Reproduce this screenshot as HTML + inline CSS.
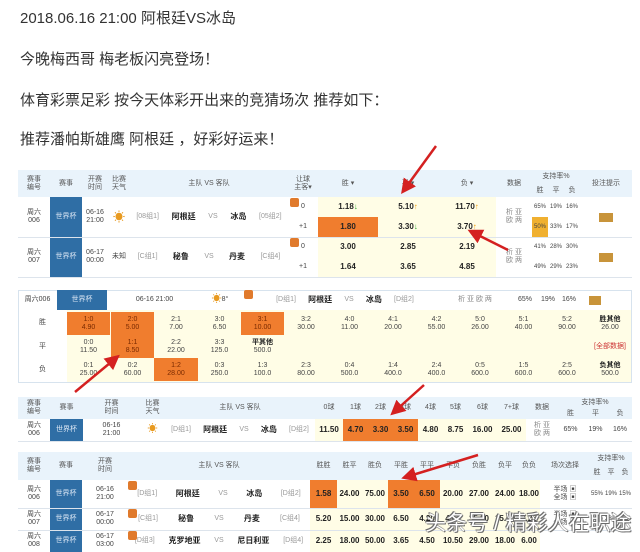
<!DOCTYPE html>
<html><head><meta charset="utf-8"><style>
*{margin:0;padding:0;box-sizing:border-box}
body{width:640px;height:545px;background:#fff;position:relative;overflow:hidden;font-family:"Liberation Sans","Noto Sans CJK SC",sans-serif;color:#333}
.t{position:absolute;left:20px;font-size:15px;color:#333;white-space:nowrap;line-height:18px}
.c{position:absolute;display:flex;align-items:center;justify-content:center;text-align:center;font-size:7px;line-height:8px;color:#444;white-space:nowrap}
.h{background:#e9f3fb;color:#555}
.y{background:#fffde6}
.o{background:#f07d2e;color:#7a2a00}
.b{background:#2f6ea5;color:#dde8f5}
.bold{font-weight:bold;color:#222;font-size:8px}
.ln{position:absolute;background:#dde4ec}
.box{position:absolute;border:1px solid #d7e3ee}
.sh{width:9px;height:9px;background:#e07a2c;border-radius:2px}
.s6{font-size:6px}
</style></head><body>
<div class="t" style="top:10px">2018.06.16 21:00 阿根廷VS冰岛</div>
<div class="t" style="top:51px">今晚梅西哥 梅老板闪亮登场！</div>
<div class="t" style="top:92px">体育彩票足彩 按今天体彩开出来的竞猜场次 推荐如下：</div>
<div class="t" style="top:131px">推荐潘帕斯雄鹰 阿根廷 ，好彩好运来！</div>

<!-- TABLE 1 -->
<div class="c h" style="left:18px;top:170px;width:614px;height:27px"></div>
<div class="c h" style="left:18px;top:170px;width:32px;height:27px">赛事<br>编号</div>
<div class="c h" style="left:50px;top:170px;width:32px;height:27px">赛事</div>
<div class="c h" style="left:82px;top:170px;width:26px;height:27px">开赛<br>时间</div>
<div class="c h" style="left:108px;top:170px;width:22px;height:27px">比赛<br>天气</div>
<div class="c h" style="left:130px;top:170px;width:158px;height:27px">主队 VS 客队</div>
<div class="c h" style="left:288px;top:170px;width:30px;height:27px">让球<br>主客▾</div>
<div class="c h" style="left:318px;top:170px;width:60px;height:27px">胜 ▾</div>
<div class="c h" style="left:378px;top:170px;width:60px;height:27px">平 ▾</div>
<div class="c h" style="left:438px;top:170px;width:58px;height:27px">负 ▾</div>
<div class="c h" style="left:496px;top:170px;width:36px;height:27px">数据</div>
<div class="c h" style="left:532px;top:170px;width:48px;height:14px">支持率%</div>
<div class="c h" style="left:532px;top:184px;width:16px;height:13px">胜</div>
<div class="c h" style="left:548px;top:184px;width:16px;height:13px">平</div>
<div class="c h" style="left:564px;top:184px;width:16px;height:13px">负</div>
<div class="c h" style="left:580px;top:170px;width:52px;height:27px">投注提示</div>

<div class="c" style="left:18px;top:197px;width:32px;height:40px">周六<br>006</div>
<div class="c b" style="left:50px;top:197px;width:32px;height:40px">世界杯</div>
<div class="c" style="left:82px;top:197px;width:26px;height:40px">06-16<br>21:00</div>
<div class="c" style="left:108px;top:197px;width:22px;height:40px;color:#e89a20;font-size:12px">☀</div>
<div class="c" style="left:130px;top:197px;width:158px;height:40px;justify-content:space-around;color:#999">[08组1] <b style="color:#222;font-size:8px">阿根廷</b> VS <b style="color:#222;font-size:8px">冰岛</b> [05组2]</div>
<div class="c" style="left:288px;top:197px;width:30px;height:20px">0</div>
<div class="c" style="left:288px;top:217px;width:30px;height:20px">+1</div>
<div class="c y bold" style="left:318px;top:197px;width:60px;height:20px">1.18 <span style="color:#3a3">↓</span></div>
<div class="c y bold" style="left:378px;top:197px;width:60px;height:20px">5.10 <span style="color:#e90">↑</span></div>
<div class="c y bold" style="left:438px;top:197px;width:58px;height:20px">11.70 <span style="color:#e90">↑</span></div>
<div class="c o bold" style="left:318px;top:217px;width:60px;height:20px">1.80</div>
<div class="c y bold" style="left:378px;top:217px;width:60px;height:20px">3.30 <span style="color:#3a3">↓</span></div>
<div class="c y bold" style="left:438px;top:217px;width:58px;height:20px">3.70 <span style="color:#e90">↑</span></div>
<div class="c" style="left:496px;top:197px;width:36px;height:40px;color:#888">析 亚<br>欧 两</div>
<div class="c s6" style="left:532px;top:197px;width:16px;height:20px">65%</div>
<div class="c s6" style="left:548px;top:197px;width:16px;height:20px">19%</div>
<div class="c s6" style="left:564px;top:197px;width:16px;height:20px">16%</div>
<div class="c s6" style="left:532px;top:217px;width:16px;height:20px;background:#f0b030">50%</div>
<div class="c s6" style="left:548px;top:217px;width:16px;height:20px">33%</div>
<div class="c s6" style="left:564px;top:217px;width:16px;height:20px">17%</div>
<div class="c" style="left:580px;top:197px;width:52px;height:40px"><div style="width:14px;height:9px;background:#c8943a"></div></div>

<div class="c" style="left:18px;top:237px;width:32px;height:40px">周六<br>007</div>
<div class="c b" style="left:50px;top:237px;width:32px;height:40px">世界杯</div>
<div class="c" style="left:82px;top:237px;width:26px;height:40px">06-17<br>00:00</div>
<div class="c" style="left:108px;top:237px;width:22px;height:40px">未知</div>
<div class="c" style="left:130px;top:237px;width:158px;height:40px;justify-content:space-around;color:#999">[C组1] <b style="color:#222;font-size:8px">秘鲁</b> VS <b style="color:#222;font-size:8px">丹麦</b> [C组4]</div>
<div class="c" style="left:288px;top:237px;width:30px;height:20px">0</div>
<div class="c" style="left:288px;top:257px;width:30px;height:20px">+1</div>
<div class="c y bold" style="left:318px;top:237px;width:60px;height:20px">3.00</div>
<div class="c y bold" style="left:378px;top:237px;width:60px;height:20px">2.85</div>
<div class="c y bold" style="left:438px;top:237px;width:58px;height:20px">2.19</div>
<div class="c y bold" style="left:318px;top:257px;width:60px;height:20px">1.64</div>
<div class="c y bold" style="left:378px;top:257px;width:60px;height:20px">3.65</div>
<div class="c y bold" style="left:438px;top:257px;width:58px;height:20px">4.85</div>
<div class="c" style="left:496px;top:237px;width:36px;height:40px;color:#888">析 亚<br>欧 两</div>
<div class="c s6" style="left:532px;top:237px;width:16px;height:20px">41%</div>
<div class="c s6" style="left:548px;top:237px;width:16px;height:20px">28%</div>
<div class="c s6" style="left:564px;top:237px;width:16px;height:20px">30%</div>
<div class="c s6" style="left:532px;top:257px;width:16px;height:20px">49%</div>
<div class="c s6" style="left:548px;top:257px;width:16px;height:20px">29%</div>
<div class="c s6" style="left:564px;top:257px;width:16px;height:20px">23%</div>
<div class="c" style="left:580px;top:237px;width:52px;height:40px"><div style="width:14px;height:9px;background:#c8943a"></div></div>
<div class="ln" style="left:18px;top:277px;width:614px;height:1px"></div>
<div class="ln" style="left:18px;top:237px;width:614px;height:1px"></div>
<div style="position:absolute;left:290px;top:198px" class="sh"></div>
<div style="position:absolute;left:290px;top:238px" class="sh"></div>

<!-- TABLE 2 -->
<div class="box" style="left:18px;top:290px;width:614px;height:93px"></div>
<div class="c" style="left:18px;top:290px;width:39px;height:20px">周六006</div>
<div class="c b" style="left:57px;top:290px;width:50px;height:20px">世界杯</div>
<div class="c" style="left:107px;top:290px;width:95px;height:20px">06-16 21:00</div>
<div class="c" style="left:200px;top:290px;width:40px;height:20px;color:#e89a20;font-size:10px">☀<span style="font-size:7px;color:#444">8°</span></div>
<div class="c" style="left:270px;top:290px;width:150px;height:20px;justify-content:space-around;color:#999">[D组1] <b style="color:#222;font-size:8px">阿根廷</b> VS <b style="color:#222;font-size:8px">冰岛</b> [D组2]</div>
<div style="position:absolute;left:244px;top:290px" class="sh"></div>
<div class="c" style="left:450px;top:290px;width:50px;height:20px;color:#888">析 亚 欧 两</div>
<div class="c" style="left:515px;top:290px;width:20px;height:20px">65%</div>
<div class="c" style="left:538px;top:290px;width:20px;height:20px">19%</div>
<div class="c" style="left:559px;top:290px;width:20px;height:20px">16%</div>
<div class="c" style="left:588px;top:290px;width:14px;height:20px"><div style="width:12px;height:9px;background:#c8943a"></div></div>
<div class="c" style="left:67px;top:310px;width:564px;height:72px;background:#fffde6"></div>
<div class="c" style="left:18px;top:310px;width:49px;height:25px">胜</div>
<div class="c" style="left:18px;top:335px;width:49px;height:23px">平</div>
<div class="c" style="left:18px;top:358px;width:49px;height:24px">负</div>

<div class="c o" style="left:67px;top:312px;width:43px;height:23px">1:0<br>4.90</div>
<div class="c o" style="left:111px;top:312px;width:43px;height:23px">2:0<br>5.00</div>
<div class="c" style="left:154px;top:312px;width:44px;height:23px">2:1<br>7.00</div>
<div class="c" style="left:198px;top:312px;width:43px;height:23px">3:0<br>6.50</div>
<div class="c o" style="left:241px;top:312px;width:43px;height:23px">3:1<br>10.00</div>
<div class="c" style="left:284px;top:312px;width:44px;height:23px">3:2<br>30.00</div>
<div class="c" style="left:328px;top:312px;width:43px;height:23px">4:0<br>11.00</div>
<div class="c" style="left:371px;top:312px;width:44px;height:23px">4:1<br>20.00</div>
<div class="c" style="left:415px;top:312px;width:43px;height:23px">4:2<br>55.00</div>
<div class="c" style="left:458px;top:312px;width:44px;height:23px">5:0<br>26.00</div>
<div class="c" style="left:502px;top:312px;width:43px;height:23px">5:1<br>40.00</div>
<div class="c" style="left:545px;top:312px;width:44px;height:23px">5:2<br>90.00</div>
<div class="c" style="left:589px;top:312px;width:42px;height:23px;flex-direction:column"><b style="color:#222">胜其他</b>26.00</div>

<div class="c" style="left:67px;top:335px;width:43px;height:23px">0:0<br>11.50</div>
<div class="c o" style="left:111px;top:335px;width:43px;height:23px">1:1<br>8.50</div>
<div class="c" style="left:154px;top:335px;width:44px;height:23px">2:2<br>22.00</div>
<div class="c" style="left:198px;top:335px;width:43px;height:23px">3:3<br>125.0</div>
<div class="c" style="left:241px;top:335px;width:43px;height:23px;flex-direction:column"><b style="color:#222">平其他</b>500.0</div>
<div class="c" style="left:589px;top:335px;width:42px;height:23px;color:#c33">[全部数据]</div>

<div class="c" style="left:67px;top:358px;width:43px;height:23px">0:1<br>25.00</div>
<div class="c" style="left:111px;top:358px;width:43px;height:23px">0:2<br>60.00</div>
<div class="c o" style="left:154px;top:358px;width:44px;height:23px">1:2<br>28.00</div>
<div class="c" style="left:198px;top:358px;width:43px;height:23px">0:3<br>250.0</div>
<div class="c" style="left:241px;top:358px;width:43px;height:23px">1:3<br>100.0</div>
<div class="c" style="left:284px;top:358px;width:44px;height:23px">2:3<br>80.00</div>
<div class="c" style="left:328px;top:358px;width:43px;height:23px">0:4<br>500.0</div>
<div class="c" style="left:371px;top:358px;width:44px;height:23px">1:4<br>400.0</div>
<div class="c" style="left:415px;top:358px;width:43px;height:23px">2:4<br>400.0</div>
<div class="c" style="left:458px;top:358px;width:44px;height:23px">0:5<br>600.0</div>
<div class="c" style="left:502px;top:358px;width:43px;height:23px">1:5<br>600.0</div>
<div class="c" style="left:545px;top:358px;width:44px;height:23px">2:5<br>600.0</div>
<div class="c" style="left:589px;top:358px;width:42px;height:23px;flex-direction:column"><b style="color:#222">负其他</b>500.0</div>

<!-- TABLE 3 -->
<div class="c h" style="left:18px;top:397px;width:614px;height:22px"></div>
<div class="c h" style="left:18px;top:397px;width:32px;height:22px">赛事<br>编号</div>
<div class="c h" style="left:50px;top:397px;width:33px;height:22px">赛事</div>
<div class="c h" style="left:83px;top:397px;width:57px;height:22px">开赛<br>时间</div>
<div class="c h" style="left:140px;top:397px;width:25px;height:22px">比赛<br>天气</div>
<div class="c h" style="left:165px;top:397px;width:150px;height:22px">主队 VS 客队</div>
<div class="c h" style="left:315px;top:397px;width:28px;height:22px">0球</div>
<div class="c h" style="left:343px;top:397px;width:25px;height:22px">1球</div>
<div class="c h" style="left:368px;top:397px;width:25px;height:22px">2球</div>
<div class="c h" style="left:393px;top:397px;width:25px;height:22px">3球</div>
<div class="c h" style="left:418px;top:397px;width:25px;height:22px">4球</div>
<div class="c h" style="left:443px;top:397px;width:25px;height:22px">5球</div>
<div class="c h" style="left:468px;top:397px;width:29px;height:22px">6球</div>
<div class="c h" style="left:497px;top:397px;width:29px;height:22px">7+球</div>
<div class="c h" style="left:526px;top:397px;width:32px;height:22px">数据</div>
<div class="c h" style="left:558px;top:397px;width:74px;height:11px">支持率%</div>
<div class="c h" style="left:558px;top:408px;width:25px;height:11px">胜</div>
<div class="c h" style="left:583px;top:408px;width:25px;height:11px">平</div>
<div class="c h" style="left:608px;top:408px;width:24px;height:11px">负</div>
<div class="c" style="left:18px;top:419px;width:32px;height:22px">周六<br>006</div>
<div class="c b" style="left:50px;top:419px;width:33px;height:22px">世界杯</div>
<div class="c" style="left:83px;top:419px;width:57px;height:22px">06-16<br>21:00</div>
<div class="c" style="left:140px;top:419px;width:25px;height:22px;color:#e89a20;font-size:10px">☀</div>
<div class="c" style="left:165px;top:419px;width:150px;height:22px;justify-content:space-around;color:#999">[D组1] <b style="color:#222;font-size:8px">阿根廷</b> VS <b style="color:#222;font-size:8px">冰岛</b> [D组2]</div>
<div class="c y bold" style="left:315px;top:419px;width:28px;height:22px">11.50</div>
<div class="c o bold" style="left:343px;top:419px;width:25px;height:22px">4.70</div>
<div class="c o bold" style="left:368px;top:419px;width:25px;height:22px">3.30</div>
<div class="c o bold" style="left:393px;top:419px;width:25px;height:22px">3.50</div>
<div class="c y bold" style="left:418px;top:419px;width:25px;height:22px">4.80</div>
<div class="c y bold" style="left:443px;top:419px;width:25px;height:22px">8.75</div>
<div class="c y bold" style="left:468px;top:419px;width:29px;height:22px">16.00</div>
<div class="c y bold" style="left:497px;top:419px;width:29px;height:22px">25.00</div>
<div class="c" style="left:526px;top:419px;width:32px;height:22px;color:#888">析 亚<br>欧 两</div>
<div class="c" style="left:558px;top:419px;width:25px;height:22px">65%</div>
<div class="c" style="left:583px;top:419px;width:25px;height:22px">19%</div>
<div class="c" style="left:608px;top:419px;width:24px;height:22px">16%</div>
<div class="ln" style="left:18px;top:441px;width:614px;height:1px"></div>

<!-- TABLE 4 -->
<div class="c h" style="left:18px;top:452px;width:614px;height:28px"></div>
<div class="c h" style="left:18px;top:452px;width:32px;height:28px">赛事<br>编号</div>
<div class="c h" style="left:50px;top:452px;width:32px;height:28px">赛事</div>
<div class="c h" style="left:82px;top:452px;width:46px;height:28px">开赛<br>时间</div>
<div class="c h" style="left:128px;top:452px;width:182px;height:28px">主队 VS 客队</div>
<div class="c h" style="left:310px;top:452px;width:27px;height:28px">胜胜</div>
<div class="c h" style="left:337px;top:452px;width:25px;height:28px">胜平</div>
<div class="c h" style="left:362px;top:452px;width:26px;height:28px">胜负</div>
<div class="c h" style="left:388px;top:452px;width:26px;height:28px">平胜</div>
<div class="c h" style="left:414px;top:452px;width:26px;height:28px">平平</div>
<div class="c h" style="left:440px;top:452px;width:26px;height:28px">平负</div>
<div class="c h" style="left:466px;top:452px;width:26px;height:28px">负胜</div>
<div class="c h" style="left:492px;top:452px;width:26px;height:28px">负平</div>
<div class="c h" style="left:518px;top:452px;width:22px;height:28px">负负</div>
<div class="c h" style="left:540px;top:452px;width:50px;height:28px">场次选择</div>
<div class="c h" style="left:590px;top:452px;width:42px;height:14px">支持率%</div>
<div class="c h" style="left:590px;top:466px;width:14px;height:14px">胜</div>
<div class="c h" style="left:604px;top:466px;width:14px;height:14px">平</div>
<div class="c h" style="left:618px;top:466px;width:14px;height:14px">负</div>

<div class="c" style="left:18px;top:480px;width:32px;height:28px">周六<br>006</div>
<div class="c b" style="left:50px;top:480px;width:32px;height:28px">世界杯</div>
<div class="c" style="left:82px;top:480px;width:46px;height:28px">06-16<br>21:00</div>
<div class="c" style="left:128px;top:480px;width:182px;height:28px;justify-content:space-around;color:#999">[D组1] <b style="color:#222;font-size:8px">阿根廷</b> VS <b style="color:#222;font-size:8px">冰岛</b> [D组2]</div>
<div class="c o bold" style="left:310px;top:480px;width:27px;height:28px">1.58</div>
<div class="c y bold" style="left:337px;top:480px;width:25px;height:28px">24.00</div>
<div class="c y bold" style="left:362px;top:480px;width:26px;height:28px">75.00</div>
<div class="c o bold" style="left:388px;top:480px;width:26px;height:28px">3.50</div>
<div class="c o bold" style="left:414px;top:480px;width:26px;height:28px">6.50</div>
<div class="c y bold" style="left:440px;top:480px;width:26px;height:28px">20.00</div>
<div class="c y bold" style="left:466px;top:480px;width:26px;height:28px">27.00</div>
<div class="c y bold" style="left:492px;top:480px;width:26px;height:28px">24.00</div>
<div class="c y bold" style="left:518px;top:480px;width:22px;height:28px">18.00</div>
<div class="c" style="left:540px;top:480px;width:50px;height:28px">半场 ▣<br>全场 ▣</div>
<div class="c s6" style="left:590px;top:480px;width:14px;height:28px">55%</div>
<div class="c s6" style="left:604px;top:480px;width:14px;height:28px">19%</div>
<div class="c s6" style="left:618px;top:480px;width:14px;height:28px">15%</div>

<div class="c" style="left:18px;top:508px;width:32px;height:22px">周六<br>007</div>
<div class="c b" style="left:50px;top:508px;width:32px;height:22px">世界杯</div>
<div class="c" style="left:82px;top:508px;width:46px;height:22px">06-17<br>00:00</div>
<div class="c" style="left:128px;top:508px;width:182px;height:22px;justify-content:space-around;color:#999">[C组1] <b style="color:#222;font-size:8px">秘鲁</b> VS <b style="color:#222;font-size:8px">丹麦</b> [C组4]</div>
<div class="c y bold" style="left:310px;top:508px;width:27px;height:22px">5.20</div>
<div class="c y bold" style="left:337px;top:508px;width:25px;height:22px">15.00</div>
<div class="c y bold" style="left:362px;top:508px;width:26px;height:22px">30.00</div>
<div class="c y bold" style="left:388px;top:508px;width:26px;height:22px">6.50</div>
<div class="c y bold" style="left:414px;top:508px;width:26px;height:22px">4.20</div>
<div class="c y bold" style="left:440px;top:508px;width:26px;height:22px">4.40</div>
<div class="c y bold" style="left:466px;top:508px;width:26px;height:22px">35.00</div>
<div class="c y bold" style="left:492px;top:508px;width:26px;height:22px">15.00</div>
<div class="c y bold" style="left:518px;top:508px;width:22px;height:22px">3.25</div>
<div class="c" style="left:540px;top:508px;width:50px;height:22px">半场 ▣<br>全场 ▣</div>
<div class="c s6" style="left:590px;top:508px;width:14px;height:22px">41%</div>
<div class="c s6" style="left:604px;top:508px;width:14px;height:22px">28%</div>
<div class="c s6" style="left:618px;top:508px;width:14px;height:22px">30%</div>

<div class="c" style="left:18px;top:530px;width:32px;height:22px">周六<br>008</div>
<div class="c b" style="left:50px;top:530px;width:32px;height:22px">世界杯</div>
<div class="c" style="left:82px;top:530px;width:46px;height:22px">06-17<br>03:00</div>
<div class="c" style="left:128px;top:530px;width:182px;height:22px;justify-content:space-around;color:#999">[D组3] <b style="color:#222;font-size:8px">克罗地亚</b> VS <b style="color:#222;font-size:8px">尼日利亚</b> [D组4]</div>
<div class="c y bold" style="left:310px;top:530px;width:27px;height:22px">2.25</div>
<div class="c y bold" style="left:337px;top:530px;width:25px;height:22px">18.00</div>
<div class="c y bold" style="left:362px;top:530px;width:26px;height:22px">50.00</div>
<div class="c y bold" style="left:388px;top:530px;width:26px;height:22px">3.65</div>
<div class="c y bold" style="left:414px;top:530px;width:26px;height:22px">4.50</div>
<div class="c y bold" style="left:440px;top:530px;width:26px;height:22px">10.50</div>
<div class="c y bold" style="left:466px;top:530px;width:26px;height:22px">29.00</div>
<div class="c y bold" style="left:492px;top:530px;width:26px;height:22px">18.00</div>
<div class="c y bold" style="left:518px;top:530px;width:22px;height:22px">6.00</div>
<div class="ln" style="left:18px;top:508px;width:614px;height:1px"></div>
<div class="ln" style="left:18px;top:530px;width:614px;height:1px"></div>
<div style="position:absolute;left:128px;top:481px" class="sh"></div>
<div style="position:absolute;left:128px;top:509px" class="sh"></div>
<div style="position:absolute;left:128px;top:531px" class="sh"></div>

<!-- arrows -->
<svg style="position:absolute;left:0;top:0" width="640" height="545">
<defs><marker id="a" markerWidth="6" markerHeight="6" refX="4" refY="3" orient="auto"><path d="M0,0 L6,3 L0,6 Z" fill="#d42020"/></marker></defs>
<g stroke="#d42020" stroke-width="2.5" fill="none" marker-end="url(#a)">
<line x1="436" y1="146" x2="404" y2="190"/>
<line x1="508" y1="250" x2="472" y2="232"/>
<line x1="75" y1="392" x2="116" y2="358"/>
<line x1="424" y1="385" x2="394" y2="412"/>
<line x1="478" y1="455" x2="406" y2="477"/>
</g></svg>

<div style="position:absolute;left:425px;top:507px;font-size:21px;color:#fff;white-space:nowrap;text-shadow:0 0 1px #555,0 0 1px #555,1px 1px 0 #777,-1px -1px 0 #777">头条号 / 精彩人在职途</div>
</body></html>
